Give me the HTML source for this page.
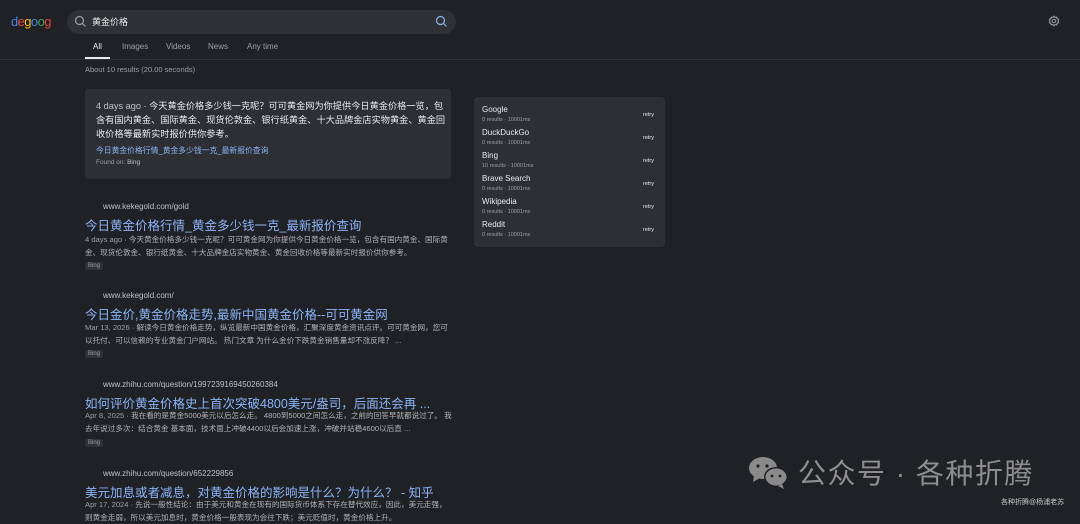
<!DOCTYPE html>
<html><head><meta charset="utf-8"><style>
*{margin:0;padding:0;box-sizing:border-box}
body{width:1080px;height:517px;overflow:hidden;background:#202124;font-family:"Liberation Sans","Noto Sans CJK SC",sans-serif;color:#bdc1c6;position:relative}
.a{position:absolute;white-space:nowrap}
.logo{left:11px;top:14px;font-size:13px;letter-spacing:-0.6px}
.sb{left:67px;top:10px;width:389px;height:24px;background:#303134;border-radius:12px}
.tab{top:42px;font-size:8px;color:#9aa0a6}
.hr{left:0;top:59px;width:1080px;height:1px;background:#303134}
.fb{left:85px;top:89px;width:366px;height:90px;background:#2e2f33;border-radius:4px}
.url{font-size:8px;color:#bdc1c6;left:103px}
.t{font-size:12.5px;color:#8ab4f8;left:85px}
.s{font-size:7.6px;color:#b0b4b9;left:85px;line-height:12.5px;white-space:normal;width:368px}
.s .d{color:#9aa0a6}
.tag{left:85px;font-size:6px;background:#303134;color:#9aa0a6;padding:1px 3px;border-radius:2px}
.sp{left:474px;top:97px;width:191px;height:150px;background:#2e2f33;border-radius:4px}
.en{left:482px;font-size:8px;color:#e8eaed}
.em{left:482px;font-size:5.5px;color:#9aa0a6}
.rt{left:643px;font-size:5.5px;color:#e8eaed}
</style></head><body>
<div class="a logo"><span style="color:#4285f4">d</span><span style="color:#ea4335">e</span><span style="color:#fbbc05">g</span><span style="color:#4285f4">o</span><span style="color:#34a853">o</span><span style="color:#ea4335">g</span></div>
<div class="a sb"></div>
<svg class="a" style="left:74px;top:15px" width="13" height="13" viewBox="0 0 13 13"><circle cx="5.5" cy="5.5" r="4" fill="none" stroke="#9aa0a6" stroke-width="1.2"/><line x1="8.5" y1="8.5" x2="11.5" y2="11.5" stroke="#9aa0a6" stroke-width="1.2"/></svg>
<div class="a" style="left:92px;top:15px;font-size:9px;color:#e8eaed">黄金价格</div>
<svg class="a" style="left:435px;top:15px" width="13" height="13" viewBox="0 0 13 13"><circle cx="5.5" cy="5.5" r="4" fill="none" stroke="#8ab4f8" stroke-width="1.2"/><line x1="8.5" y1="8.5" x2="11.5" y2="11.5" stroke="#8ab4f8" stroke-width="1.2"/></svg>
<svg class="a" style="left:1048px;top:15px" width="12" height="12" viewBox="0 0 24 24"><circle cx="12" cy="12" r="3.5" fill="none" stroke="#9aa0a6" stroke-width="2"/><path d="M12 2l2 3 3.5-1 .5 3.5 3.5 1-1.5 3.5 1.5 3.5-3.5 1-.5 3.5-3.5-1-2 3-2-3-3.5 1-.5-3.5-3.5-1 1.5-3.5L2.5 8.5 6 7.5 6.5 4l3.5 1z" fill="none" stroke="#9aa0a6" stroke-width="2" stroke-linejoin="round"/></svg>
<div class="a tab" style="left:93px;color:#e8eaed">All</div>
<div class="a" style="left:85px;top:57px;width:25px;height:2px;background:#e8eaed"></div>
<div class="a tab" style="left:122px">Images</div>
<div class="a tab" style="left:166px">Videos</div>
<div class="a tab" style="left:208px">News</div>
<div class="a tab" style="left:247px">Any time</div>
<div class="a hr"></div>
<div class="a" style="left:85px;top:65px;font-size:7.5px;color:#9aa0a6">About 10 results (20.00 seconds)</div>
<div class="a fb"></div>
<div class="a" style="left:96px;top:99px;width:350px;font-size:9.2px;line-height:14px;white-space:normal;color:#e8eaed"><span style="color:#bdc1c6">4 days ago</span> · 今天黄金价格多少钱一克呢？可可黄金网为你提供今日黄金价格一览，包含有国内黄金、国际黄金、现货伦敦金、银行纸黄金、十大品牌金店实物黄金、黄金回收价格等最新实时报价供你参考。</div>
<div class="a" style="left:96px;top:145px;font-size:7.8px;color:#8ab4f8">今日黄金价格行情_黄金多少钱一克_最新报价查询</div>
<div class="a" style="left:96px;top:159px;font-size:6.5px;color:#9aa0a6">Found on: <span style="color:#bdc1c6">Bing</span></div>

<div class="a url" style="top:202px">www.kekegold.com/gold</div>
<div class="a t" style="top:215px">今日黄金价格行情_黄金多少钱一克_最新报价查询</div>
<div class="a s" style="top:234px"><span class="d">4 days ago</span> · 今天黄金价格多少钱一克呢？可可黄金网为你提供今日黄金价格一览，包含有国内黄金、国际黄金、现货伦敦金、银行纸黄金、十大品牌金店实物黄金、黄金回收价格等最新实时报价供你参考。</div>
<div class="a tag" style="top:262px">Bing</div>

<div class="a url" style="top:291px">www.kekegold.com/</div>
<div class="a t" style="top:304px">今日金价,黄金价格走势,最新中国黄金价格--可可黄金网</div>
<div class="a s" style="top:322px"><span class="d">Mar 13, 2026</span> · 解读今日黄金价格走势，纵览最新中国黄金价格，汇聚深度黄金资讯点评。可可黄金网，您可以托付、可以信赖的专业黄金门户网站。 热门文章 为什么金价下跌黄金销售量却不涨反降？ ...</div>
<div class="a tag" style="top:350px">Bing</div>

<div class="a url" style="top:380px">www.zhihu.com/question/1997239169450260384</div>
<div class="a t" style="top:393px">如何评价黄金价格史上首次突破4800美元/盎司，后面还会再 ...</div>
<div class="a s" style="top:410px"><span class="d">Apr 8, 2025</span> · 我在看的是黄金5000美元以后怎么走。 4800到5000之间怎么走，之前的回答早就都说过了。 我去年说过多次：结合黄金 基本面，技术面上冲破4400以后会加速上涨，冲破并站稳4600以后直 ...</div>
<div class="a tag" style="top:439px">Bing</div>

<div class="a url" style="top:469px">www.zhihu.com/question/652229856</div>
<div class="a t" style="top:482px">美元加息或者减息，对黄金价格的影响是什么？为什么？ - 知乎</div>
<div class="a s" style="top:499px"><span class="d">Apr 17, 2024</span> · 先说一般性结论：由于美元和黄金在现有的国际货币体系下存在替代效应，因此，美元走强，则黄金走弱，所以美元加息时，黄金价格一般表现为会往下跌；美元贬值时，黄金价格上升。</div>

<div class="a sp"></div>
<div class="a en" style="top:105px">Google</div><div class="a em" style="top:117px">0 results · 10001ms</div><div class="a rt" style="top:112px">retry</div>
<div class="a en" style="top:128px">DuckDuckGo</div><div class="a em" style="top:140px">0 results · 10001ms</div><div class="a rt" style="top:135px">retry</div>
<div class="a en" style="top:151px">Bing</div><div class="a em" style="top:163px">10 results · 10001ms</div><div class="a rt" style="top:158px">retry</div>
<div class="a en" style="top:174px">Brave Search</div><div class="a em" style="top:186px">0 results · 10001ms</div><div class="a rt" style="top:181px">retry</div>
<div class="a en" style="top:197px">Wikipedia</div><div class="a em" style="top:209px">0 results · 10001ms</div><div class="a rt" style="top:204px">retry</div>
<div class="a en" style="top:220px">Reddit</div><div class="a em" style="top:232px">0 results · 10001ms</div><div class="a rt" style="top:227px">retry</div>

<svg class="a" style="left:748px;top:455px" width="42" height="36" viewBox="0 0 42 36"><ellipse cx="15" cy="13" rx="14" ry="11" fill="#8a8a8a"/><path d="M6 21l-1 6 7-4z" fill="#8a8a8a"/><ellipse cx="28" cy="22" rx="12" ry="10" fill="#202124"/><ellipse cx="28" cy="22" rx="10.5" ry="8.5" fill="#8a8a8a"/><path d="M34 29l2 5-6-3z" fill="#8a8a8a"/><circle cx="10" cy="11" r="1.6" fill="#202124"/><circle cx="19" cy="11" r="1.6" fill="#202124"/><circle cx="24" cy="21" r="1.4" fill="#202124"/><circle cx="32" cy="21" r="1.4" fill="#202124"/></svg>
<div class="a" style="left:798px;top:452px;font-size:28px;color:#8e8e8e;letter-spacing:1.5px">公众号 · 各种折腾</div>
<div class="a" style="left:1001px;top:497px;font-size:7px;color:#c8c8c8">各种折腾@杨浦老苏</div>
</body></html>
